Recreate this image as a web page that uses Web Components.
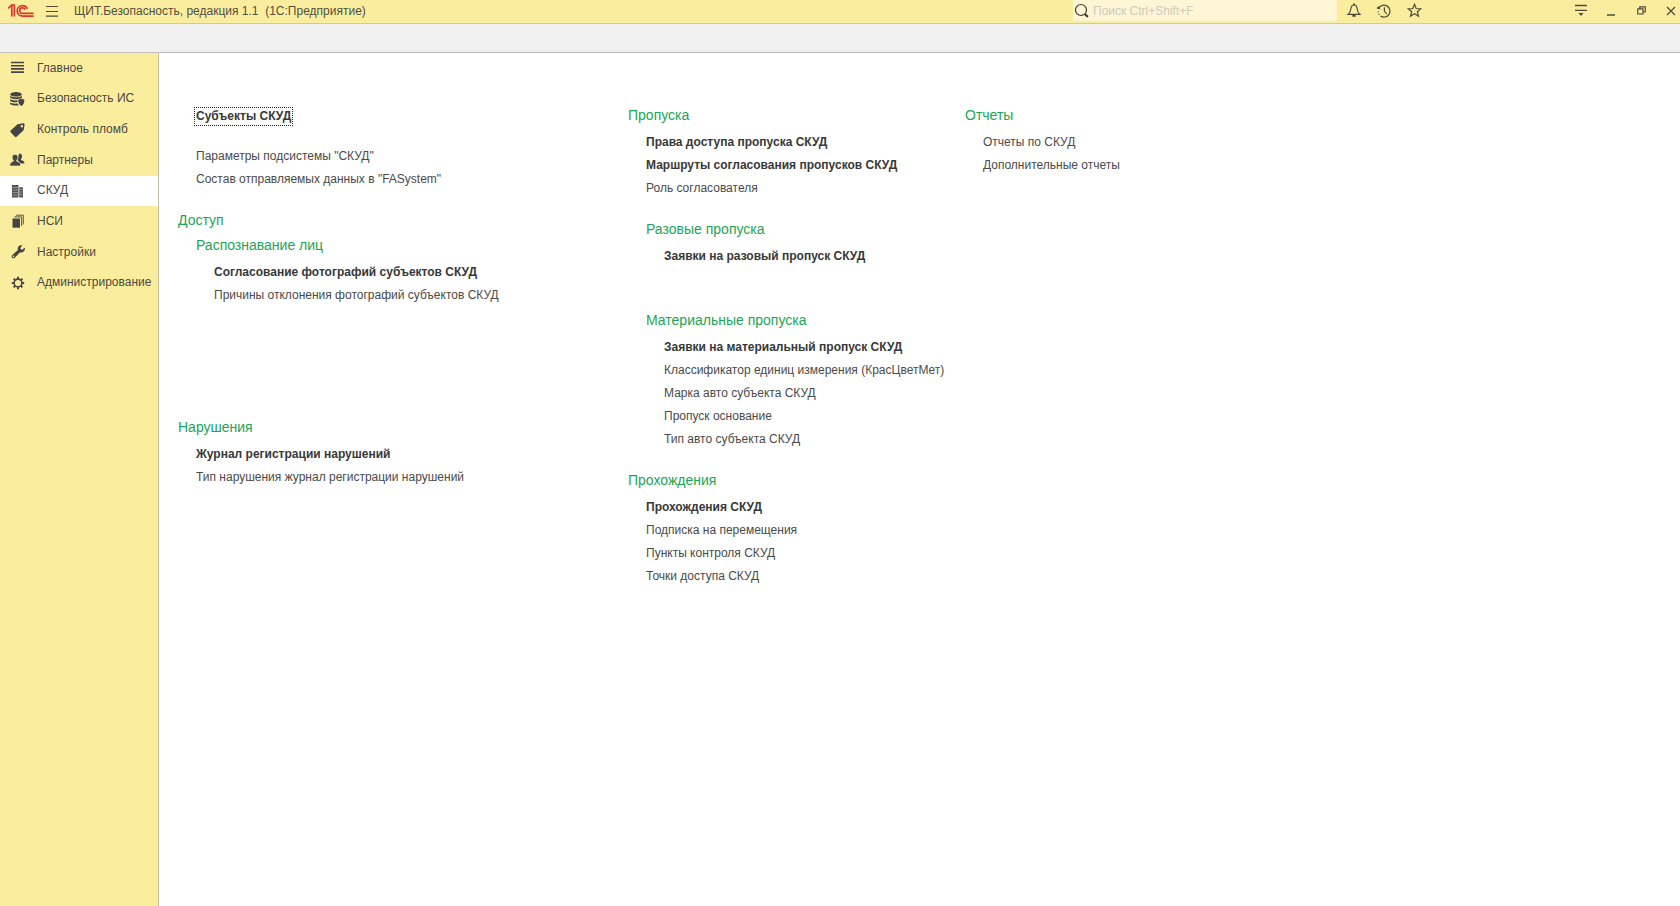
<!DOCTYPE html>
<html lang="ru">
<head>
<meta charset="utf-8">
<title>ЩИТ.Безопасность, редакция 1.1 (1С:Предприятие)</title>
<style>
html, body { margin: 0; height: 100%; }
body { font: 12px/23px "Liberation Sans", Arial, sans-serif; color: #4a4a4a; background: #fff; }
</style>
</head>
<body>
<erp-app></erp-app>

<template id="t-app">
<style>
:host { display: flex; flex-direction: column; min-height: 100vh; }
.tabs { box-sizing: border-box; height: 29px; background: #f1f1f1; border-bottom: 1px solid #bdbdbd; flex: none; }
.body { flex: 1; display: flex; }
main { flex: 1; display: grid; grid-template-columns: 450px 337px 1fr; padding: 51px 0 0 19px; align-content: start; }
.focus { margin: 1px 0 17px; }
.near { margin-top: -2px; }
.far { margin-top: 41px; }
.farther { margin-top: 109px; }
</style>
<erp-titlebar></erp-titlebar>
<div class="tabs"></div>
<div class="body">
  <erp-nav></erp-nav>
  <main>
    <div>
      <erp-group>
        <erp-link class="focus" bold focused>Субъекты СКУД</erp-link>
        <erp-link>Параметры подсистемы "СКУД"</erp-link>
        <erp-link>Состав отправляемых данных в "FASystem"</erp-link>
      </erp-group>
      <erp-group heading="Доступ">
        <erp-group class="near" heading="Распознавание лиц" level="3">
          <erp-link bold>Согласование фотографий субъектов СКУД</erp-link>
          <erp-link>Причины отклонения фотографий субъектов СКУД</erp-link>
        </erp-group>
      </erp-group>
      <erp-group class="farther" heading="Нарушения">
        <erp-link bold>Журнал регистрации нарушений</erp-link>
        <erp-link>Тип нарушения журнал регистрации нарушений</erp-link>
      </erp-group>
    </div>
    <div>
      <erp-group heading="Пропуска">
        <erp-link bold>Права доступа пропуска СКУД</erp-link>
        <erp-link bold>Маршруты согласования пропусков СКУД</erp-link>
        <erp-link>Роль согласователя</erp-link>
        <erp-group heading="Разовые пропуска" level="3">
          <erp-link bold>Заявки на разовый пропуск СКУД</erp-link>
        </erp-group>
        <erp-group class="far" heading="Материальные пропуска" level="3">
          <erp-link bold>Заявки на материальный пропуск СКУД</erp-link>
          <erp-link>Классификатор единиц измерения (КрасЦветМет)</erp-link>
          <erp-link>Марка авто субъекта СКУД</erp-link>
          <erp-link>Пропуск основание</erp-link>
          <erp-link>Тип авто субъекта СКУД</erp-link>
        </erp-group>
      </erp-group>
      <erp-group heading="Прохождения">
        <erp-link bold>Прохождения СКУД</erp-link>
        <erp-link>Подписка на перемещения</erp-link>
        <erp-link>Пункты контроля СКУД</erp-link>
        <erp-link>Точки доступа СКУД</erp-link>
      </erp-group>
    </div>
    <div>
      <erp-group heading="Отчеты">
        <erp-link>Отчеты по СКУД</erp-link>
        <erp-link>Дополнительные отчеты</erp-link>
      </erp-group>
    </div>
  </main>
</div>
</template>

<template id="t-group">
<style>
:host { display: block; margin-top: 18px; }
:host(:first-child) { margin-top: 0; }
h2, h3 { margin: 0 0 4px; font-size: 14px; line-height: 23px; font-weight: 400; color: #1ba556; }
.items { padding-left: 18px; display: flex; flex-direction: column; align-items: flex-start; }
</style>
<div class="items"><slot></slot></div>
</template>

<template id="t-link">
<style>
:host { display: block; }
a { display: block; color: inherit; text-decoration: none; white-space: nowrap; }
:host([bold]) a { font-weight: 700; color: #383838; }
:host([focused]) a { line-height: 15px; outline: 1px dotted #222; outline-offset: 1px; margin: 4px 0; }
a:hover { text-decoration: underline; }
</style>
<a href="#"><slot></slot></a>
</template>

<template id="t-titlebar">
<style>
:host { display: flex; align-items: center; height: 24px; box-sizing: border-box; padding-bottom: 2px; background: #fbed9e; border-bottom: 1px solid #d6ca92; flex: none; }
button { border: 0; padding: 0; background: none; display: flex; align-items: center; justify-content: center; color: #4f4b3b; height: 20px; width: 16px; flex: none; }
svg { display: block; }
.logo { margin-left: 8px; }
.menu { margin-left: 10px; }
h1 { margin: 0 0 0 14px; font-size: 12px; line-height: 20px; font-weight: 400; white-space: pre; flex: 1; color: #524e3e; }
.search { display: flex; align-items: center; width: 264px; height: 21px; background: #fef6d5; border-radius: 2px; color: #3c3a30; }
.search svg { margin-left: 1px; flex: none; }
input { flex: 1; min-width: 0; border: 0; outline: 0; background: none; font: 12px/20px "Liberation Sans", Arial, sans-serif; padding: 0 0 0 3px; }
input::placeholder { color: #cfcabb; opacity: 1; }
.tools { display: flex; gap: 14px; margin: 0 151px 0 9px; }
.win { display: flex; gap: 14px; margin-right: 1px; }
</style>
<svg class="logo" width="26" height="14" viewBox="0 0 26 14" fill="none" stroke="#e0352f" stroke-width="1.7" role="img" aria-label="1С">
  <path d="M0 4.3 3.8 1.2V12.6M6.3 12.6V1H3"/>
  <path d="M19.4 4.8A5.3 5.3 0 1 0 14.6 12.2H25.6M17.1 5.8A2.8 2.8 0 1 0 14.8 9.4H25.6"/>
</svg>
<button class="menu" aria-label="Меню"><svg width="14" height="12" viewBox="0 0 14 12" stroke="currentColor" stroke-width="1.2"><path d="M1 1.5h12M1 6.5h12M1 11.2h12"/></svg></button>
<h1>ЩИТ.Безопасность, редакция 1.1  (1С:Предприятие)</h1>
<label class="search"><svg width="16" height="16" viewBox="0 0 16 16" fill="none" stroke="currentColor"><circle cx="7" cy="7" r="5.5" stroke-width="1.2"/><path d="m11 11 2.800 3" stroke-width="2.200"/></svg><input type="text" aria-label="Поиск" placeholder="Поиск Ctrl+Shift+F"></label>
<div class="tools">
  <button aria-label="Уведомления"><svg width="14" height="15" viewBox="0 0 14 15" fill="none" stroke="currentColor" stroke-width="1.2"><path d="M1.2 11.3C3.5 9.5 3.6 8 3.9 5.5 4.2 3.2 5.4 2 7 2s2.8 1.2 3.1 3.5c.3 2.5.4 4 2.7 5.8z"/><path d="M5.3 12.8h3.4M7 .6v1.5" stroke-width="1.8"/></svg></button>
  <button aria-label="История"><svg width="16" height="16" viewBox="0 0 16 16" fill="none" stroke="currentColor" stroke-width="1.2"><path d="M2.600 5.500A6 6 0 1 1 4.500 13"/><path d="M8.400 4.300v4l2.500 2.600"/><path d="M2.300 8.500v1M3 11v1"/><path d="M.3 5.200 3 3l1.300 3.500z" fill="currentColor" stroke="none"/></svg></button>
  <button aria-label="Избранное"><svg width="15" height="15" viewBox="0 0 15 15" fill="none" stroke="currentColor" stroke-width="1.2"><path d="m7.500 1.300 1.700 4.200 4.600.3-3.500 2.900 1.200 4.500-4-2.500-4 2.500 1.200-4.500L1.200 5.800l4.600-.3z"/></svg></button>
</div>
<div class="win">
  <button aria-label="Параметры окна"><svg width="14" height="13" viewBox="0 0 14 13" stroke="currentColor" stroke-width="1.3"><path d="M1 1.500h12M1 6.300h12"/><path d="M4.500 9h5L7 12z" fill="currentColor" stroke="none"/></svg></button>
  <button aria-label="Свернуть"><svg width="8" height="12" viewBox="0 0 8 12" stroke="currentColor" stroke-width="1.5"><path d="M0 10h8"/></svg></button>
  <button aria-label="Восстановить"><svg width="9" height="9" viewBox="0 0 9 9" fill="none" stroke="currentColor" stroke-width="1.2"><path d="M.8 2.800h5.200v5.200H.8zM2.800 2.800V.8h5.400V6H6"/></svg></button>
  <button aria-label="Закрыть"><svg width="10" height="10" viewBox="0 0 10 10" stroke="currentColor" stroke-width="1.2"><path d="m1 1 8 8M9 1 1 9"/></svg></button>
</div>
</template>

<template id="t-nav">
<style>
:host { display: block; width: 159px; box-sizing: border-box; background: #fbed9e; border-right: 1px solid #c4bfa0; flex: none; }
nav { display: flex; flex-direction: column; height: 245px; }
a { flex: 1; display: flex; align-items: center; gap: 12px; padding-left: 9px; color: #4c493e; text-decoration: none; }
a[aria-current] { background: #fff; }
svg { flex: none; color: #454545; }
</style>
<nav></nav>
</template>

<script>
const stamp = (host, id) => {
  const root = host.attachShadow({ mode: 'open' });
  root.append(document.getElementById(id).content.cloneNode(true));
  return root;
};

const NAV = [
  ['Главное', '<path d="M2 2.500h13M2 5.700h13M2 8.900h13M2 12.100h13" stroke="currentColor" stroke-width="1.6"/>'],
  ['Безопасность ИС', '<g fill="currentColor"><ellipse cx="7" cy="3.300" rx="5.800" ry="2.300"/><path d="M1.200 4.800c2 2 9.600 2 11.600 0v2c-2 1.800-9.600 1.800-11.600 0zM1.200 8c1.500 1.300 4.500 1.700 7.300 1.300v2c-3 .2-6-.2-7.300-1.300zM1.200 11.200c1.500 1.300 4.500 1.700 7.500 1.300l1 1.700c-3.500.6-7.300.2-8.500-1.200z"/><path d="m12.300 7.600 3 1.100c.2 2.800-.8 5-3 6.300-2.200-1.300-3.200-3.500-3-6.300z"/></g>'],
  ['Контроль пломб', '<path fill="currentColor" fill-rule="evenodd" d="M8.500 2.300 14.200 1.200c1 0 1.500.6 1.400 1.600l-1 5.500-7 6.400c-.6.500-1.200.5-1.700 0L1.600 10.200c-.5-.6-.5-1.200 0-1.700zM12.800 3a1.200 1.200 0 1 0 .1 2.400 1.200 1.200 0 0 0-.1-2.400z"/>'],
  ['Партнеры', '<g fill="currentColor"><path d="M10.300 1.500c1.800 0 2.800 1.200 2.700 2.900-.1 1.400-.5 2.100-1 2.700v1c1.900.7 3.400 1 3.500 3.500H11L8 7z"/><path stroke="#fbed9e" stroke-width=".8" d="M6 2.300c2 0 3 1.300 2.900 3.100-.1 1.500-.6 2.200-1.100 2.800v1c2.200.8 4 1.200 4 4.900H.8c0-3.700 1.500-4.100 3.500-4.900v-1C3.700 7.600 3.200 6.900 3.200 5.400 3.100 3.600 4 2.300 6 2.300z"/></g>'],
  ['СКУД', '<path fill="#555" d="M3 2h6.500v12.500H3zM10.300 4.200H14v10.300h-3.700z"/><path stroke="#aaa" stroke-width=".8" d="M3.800 4.500h5M3.800 7h5M3.800 9.500h5M3.800 12h5M10.800 6.500h3M10.800 9h3M10.800 11.500h3"/>'],
  ['НСИ', '<path fill="currentColor" d="M3.500 5.500h7.500v9.200H3.500z"/><path fill="none" stroke="currentColor" stroke-width=".9" d="M5.300 3.900h7.300V13M7.200 2.200h7.100v9.200"/>'],
  ['Настройки', '<path fill="currentColor" fill-rule="evenodd" d="M15.800 3.600 13 5.900l-1.800-1.600 2.200-3c-2.600-.7-4.700.9-4.700 3.300 0 .6.100 1 .3 1.500L3.300 11c-1.900 1.700.6 4.700 2.600 2.700l5-5.300c2.900.7 5.700-1.500 4.900-4.800zM4.600 11.600a.8.8 0 1 1 0 1.600.8.8 0 0 1 0-1.600z"/>'],
  ['Администрирование', '<circle cx="9" cy="8" r="3.900" fill="none" stroke="currentColor" stroke-width="1.6"/><path stroke="currentColor" stroke-width="2" d="M9 1.800v2M9 12.200v2M2.800 8h2M13.200 8h2M4.600 3.600l1.500 1.500M11.900 10.900l1.500 1.500M4.600 12.400l1.500-1.500M11.900 5.100l1.500-1.500"/>'],
];

customElements.define('erp-titlebar', class extends HTMLElement {
  constructor() { super(); stamp(this, 't-titlebar'); }
});

customElements.define('erp-nav', class extends HTMLElement {
  constructor() {
    super();
    stamp(this, 't-nav').querySelector('nav').innerHTML = NAV.map(([text, art]) =>
      `<a href="#"${text === 'СКУД' ? ' aria-current="page"' : ''}><svg width="16" height="16" viewBox="0 0 16 16" aria-hidden="true">${art}</svg>${text}</a>`).join('');
  }
});

customElements.define('erp-link', class extends HTMLElement {
  constructor() { super(); stamp(this, 't-link'); }
});

customElements.define('erp-group', class extends HTMLElement {
  connectedCallback() {
    if (this.shadowRoot) return;
    const root = stamp(this, 't-group');
    const text = this.getAttribute('heading');
    if (!text) return;
    const h = document.createElement('h' + (this.getAttribute('level') || 2));
    h.textContent = text;
    root.querySelector('.items').before(h);
  }
});

customElements.define('erp-app', class extends HTMLElement {
  constructor() { super(); stamp(this, 't-app'); }
});
</script>
</body>
</html>
